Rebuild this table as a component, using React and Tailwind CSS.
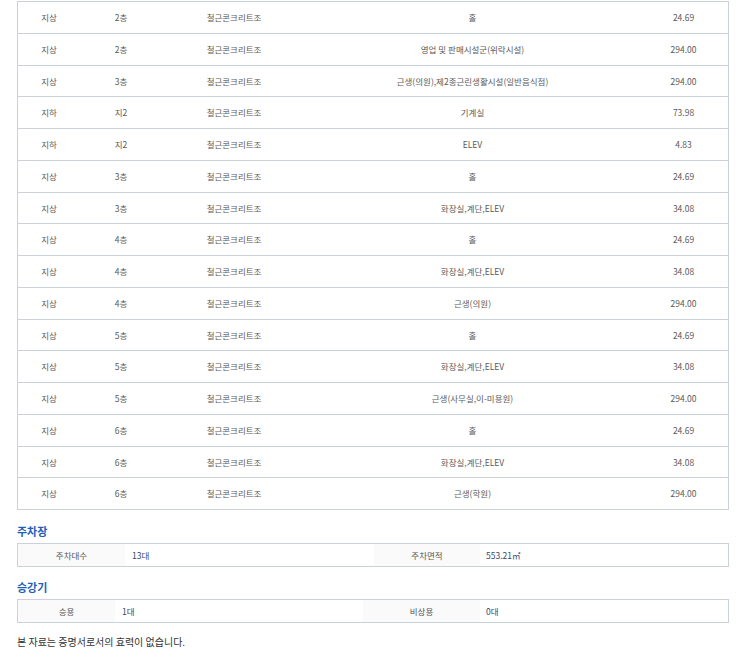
import React from "react";

const rows = [
  ["지상", "2층", "철근콘크리트조", "홀", "24.69"],
  ["지상", "2층", "철근콘크리트조", "영업 및 판매시설군(위락시설)", "294.00"],
  ["지상", "3층", "철근콘크리트조", "근생(의원),제2종근린생활시설(일반음식점)", "294.00"],
  ["지하", "지2", "철근콘크리트조", "기계실", "73.98"],
  ["지하", "지2", "철근콘크리트조", "ELEV", "4.83"],
  ["지상", "3층", "철근콘크리트조", "홀", "24.69"],
  ["지상", "3층", "철근콘크리트조", "화장실,계단,ELEV", "34.08"],
  ["지상", "4층", "철근콘크리트조", "홀", "24.69"],
  ["지상", "4층", "철근콘크리트조", "화장실,계단,ELEV", "34.08"],
  ["지상", "4층", "철근콘크리트조", "근생(의원)", "294.00"],
  ["지상", "5층", "철근콘크리트조", "홀", "24.69"],
  ["지상", "5층", "철근콘크리트조", "화장실,계단,ELEV", "34.08"],
  ["지상", "5층", "철근콘크리트조", "근생(사무실,이-미용원)", "294.00"],
  ["지상", "6층", "철근콘크리트조", "홀", "24.69"],
  ["지상", "6층", "철근콘크리트조", "화장실,계단,ELEV", "34.08"],
  ["지상", "6층", "철근콘크리트조", "근생(학원)", "294.00"],
];

const font = { fontFamily: '"Noto Sans CJK KR", "Noto Sans", sans-serif' };

export default function App() {
  return (
    <div className="bg-white w-[755px] h-[667px] overflow-hidden pt-px pl-[17px] pr-[26px]" style={font}>
      <div className="border-t border-l border-r border-[#cdd1dc] w-[712px]">
        {rows.map((r, i) => (
          <div key={i} className="flex h-[31.75px] border-b border-[#cdd1dc] items-center text-[8.5px] text-[#5a5a5a]">
            <div className="w-[62px] text-center">{r[0]}</div>
            <div className="w-[82px] text-center">{r[1]}</div>
            <div className="w-[144px] text-center">{r[2]}</div>
            <div className="w-[333px] text-center">{r[3]}</div>
            <div className="w-[89px] text-center">{r[4]}</div>
          </div>
        ))}
      </div>

      <div className="mt-[11px] mb-[2px] h-[20px] leading-[20px] text-[11px] font-bold text-[#1f5fb8]">주차장</div>
      <div className="flex w-[712px] h-[24px] border border-[#cdd1dc] text-[8.5px] text-[#555]">
        <div className="w-[107px] bg-[#fafafa] flex items-center justify-center">주차대수</div>
        <div className="w-[249px] flex items-center pl-[7px] text-[#3a4a70]">13대</div>
        <div className="w-[106px] bg-[#fafafa] flex items-center justify-center">주차면적</div>
        <div className="flex-1 flex items-center pl-[6px] text-[#3a4a70]">553.21㎡</div>
      </div>

      <div className="mt-[10px] mb-[2px] h-[20px] leading-[20px] text-[11px] font-bold text-[#1f5fb8]">승강기</div>
      <div className="flex w-[712px] h-[24px] border border-[#cdd1dc] text-[8.5px] text-[#555]">
        <div className="w-[97px] bg-[#fafafa] flex items-center justify-center">승용</div>
        <div className="w-[248px] flex items-center pl-[7px] text-[#3a4a70]">1대</div>
        <div className="w-[117px] bg-[#fafafa] flex items-center justify-center">비상용</div>
        <div className="flex-1 flex items-center pl-[6px] text-[#3a4a70]">0대</div>
      </div>

      <div className="mt-[9px] h-[20px] leading-[20px] text-[10px] text-[#333]">본 자료는 증명서로서의 효력이 없습니다.</div>
    </div>
  );
}
